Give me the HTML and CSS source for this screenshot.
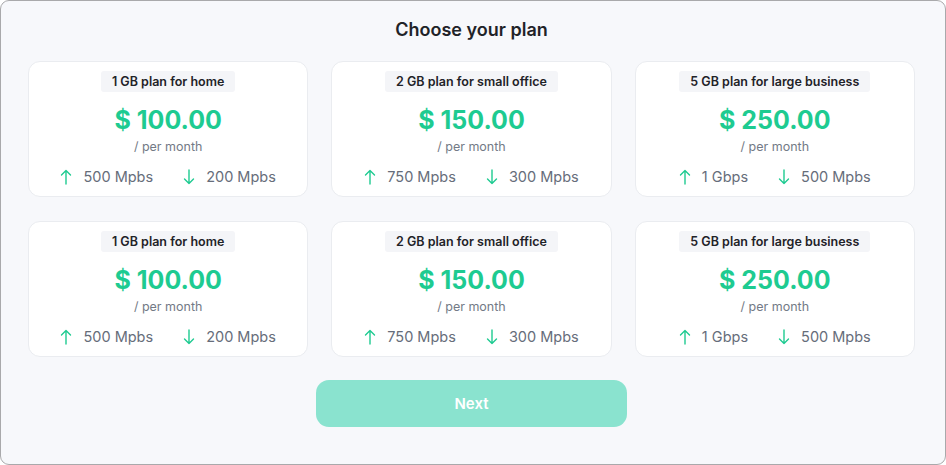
FILE: index.html
```html
<!DOCTYPE html>
<html lang="en">
<head>
  <meta charset="UTF-8" />
  <meta name="viewport" content="width=device-width, initial-scale=1.0"/>
  <title>Choose your plan</title>
  <link rel="stylesheet" href="styles.css">
</head>
<body>

  <div class="frame">
    <h1 class="title">Choose your plan</h1>

    <!-- Plans grid -->
    <div class="plans">
      <div class="plan">
        <span class="tag">1 GB plan for home</span>
        <div class="price">$ 100.00</div>
        <div class="period">/ per month</div>
        <div class="speeds">
          <span class="speed"><svg class="arrow" viewBox="0 0 12 16"><path d="M6 15V1.5M1.5 6L6 1.5 10.5 6"/></svg>500 Mpbs</span>
          <span class="speed"><svg class="arrow" viewBox="0 0 12 16"><path d="M6 1v13.5M1.5 10L6 14.5 10.5 10"/></svg>200 Mpbs</span>
        </div>
      </div>
      <div class="plan">
        <span class="tag">2 GB plan for small office</span>
        <div class="price">$ 150.00</div>
        <div class="period">/ per month</div>
        <div class="speeds">
          <span class="speed"><svg class="arrow" viewBox="0 0 12 16"><path d="M6 15V1.5M1.5 6L6 1.5 10.5 6"/></svg>750 Mpbs</span>
          <span class="speed"><svg class="arrow" viewBox="0 0 12 16"><path d="M6 1v13.5M1.5 10L6 14.5 10.5 10"/></svg>300 Mpbs</span>
        </div>
      </div>
      <div class="plan">
        <span class="tag">5 GB plan for large business</span>
        <div class="price">$ 250.00</div>
        <div class="period">/ per month</div>
        <div class="speeds">
          <span class="speed"><svg class="arrow" viewBox="0 0 12 16"><path d="M6 15V1.5M1.5 6L6 1.5 10.5 6"/></svg>1 Gbps</span>
          <span class="speed"><svg class="arrow" viewBox="0 0 12 16"><path d="M6 1v13.5M1.5 10L6 14.5 10.5 10"/></svg>500 Mpbs</span>
        </div>
      </div>
      <div class="plan">
        <span class="tag">1 GB plan for home</span>
        <div class="price">$ 100.00</div>
        <div class="period">/ per month</div>
        <div class="speeds">
          <span class="speed"><svg class="arrow" viewBox="0 0 12 16"><path d="M6 15V1.5M1.5 6L6 1.5 10.5 6"/></svg>500 Mpbs</span>
          <span class="speed"><svg class="arrow" viewBox="0 0 12 16"><path d="M6 1v13.5M1.5 10L6 14.5 10.5 10"/></svg>200 Mpbs</span>
        </div>
      </div>
      <div class="plan">
        <span class="tag">2 GB plan for small office</span>
        <div class="price">$ 150.00</div>
        <div class="period">/ per month</div>
        <div class="speeds">
          <span class="speed"><svg class="arrow" viewBox="0 0 12 16"><path d="M6 15V1.5M1.5 6L6 1.5 10.5 6"/></svg>750 Mpbs</span>
          <span class="speed"><svg class="arrow" viewBox="0 0 12 16"><path d="M6 1v13.5M1.5 10L6 14.5 10.5 10"/></svg>300 Mpbs</span>
        </div>
      </div>
      <div class="plan">
        <span class="tag">5 GB plan for large business</span>
        <div class="price">$ 250.00</div>
        <div class="period">/ per month</div>
        <div class="speeds">
          <span class="speed"><svg class="arrow" viewBox="0 0 12 16"><path d="M6 15V1.5M1.5 6L6 1.5 10.5 6"/></svg>1 Gbps</span>
          <span class="speed"><svg class="arrow" viewBox="0 0 12 16"><path d="M6 1v13.5M1.5 10L6 14.5 10.5 10"/></svg>500 Mpbs</span>
        </div>
      </div>
    </div>

    <button class="next-btn">Next</button>
  </div>

</body>
</html>
```

FILE: styles.css
```css
* {
  box-sizing: border-box;
  margin: 0;
  padding: 0;
}

body {
  font-family: Inter, 'Noto Sans', sans-serif;
  background: #ffffff;
}

/* ===== OUTER FRAME ===== */
.frame {
  width: 946px;
  height: 465px;
  background-color: #f7f8fb;
  border: 1px solid #a9a9ab;
  border-radius: 9px;
  display: flex;
  flex-direction: column;
  align-items: center;
  padding: 18px 30px 0 27px;
}

.title {
  font-size: 18px;
  font-weight: 600;
  color: #1f2328;
  line-height: 22px;
  margin-bottom: 20px;
}

/* ===== PLAN CARDS ===== */
.plans {
  width: 100%;
  display: grid;
  grid-template-columns: repeat(3, 1fr);
  gap: 24px 23px;
}

.plan {
  height: 136px;
  background-color: #ffffff;
  border: 1px solid #eaecf0;
  border-radius: 12px;
  display: flex;
  flex-direction: column;
  align-items: center;
  padding-top: 9px;
}

.tag {
  display: inline-block;
  background-color: #f4f5f8;
  color: #1f2328;
  font-size: 12.5px;
  font-weight: 600;
  line-height: 21px;
  padding: 0 11px;
  border-radius: 3px;
}

.price {
  color: #1ecb91;
  font-size: 25px;
  font-weight: 700;
  line-height: 32px;
  margin-top: 12px;
}

.period {
  color: #737a86;
  font-size: 12.5px;
  line-height: 18px;
  margin-top: 2px;
}

.speeds {
  display: flex;
  gap: 30px;
  margin-top: 11px;
}

.speed {
  display: flex;
  align-items: center;
  gap: 11px;
  color: #666d7a;
  font-size: 14.5px;
  line-height: 20px;
}

.arrow {
  width: 12px;
  height: 16px;
  fill: none;
  stroke: #1ecb91;
  stroke-width: 1.4;
  stroke-linecap: round;
  stroke-linejoin: round;
}

/* ===== BUTTON ===== */
.next-btn {
  margin-top: 23px;
  width: 311px;
  height: 47px;
  border: none;
  border-radius: 13px;
  background-color: #8ae3cf;
  color: #ffffff;
  font-family: Inter, 'Noto Sans', sans-serif;
  font-size: 15px;
  font-weight: 600;
  cursor: pointer;
}
```
